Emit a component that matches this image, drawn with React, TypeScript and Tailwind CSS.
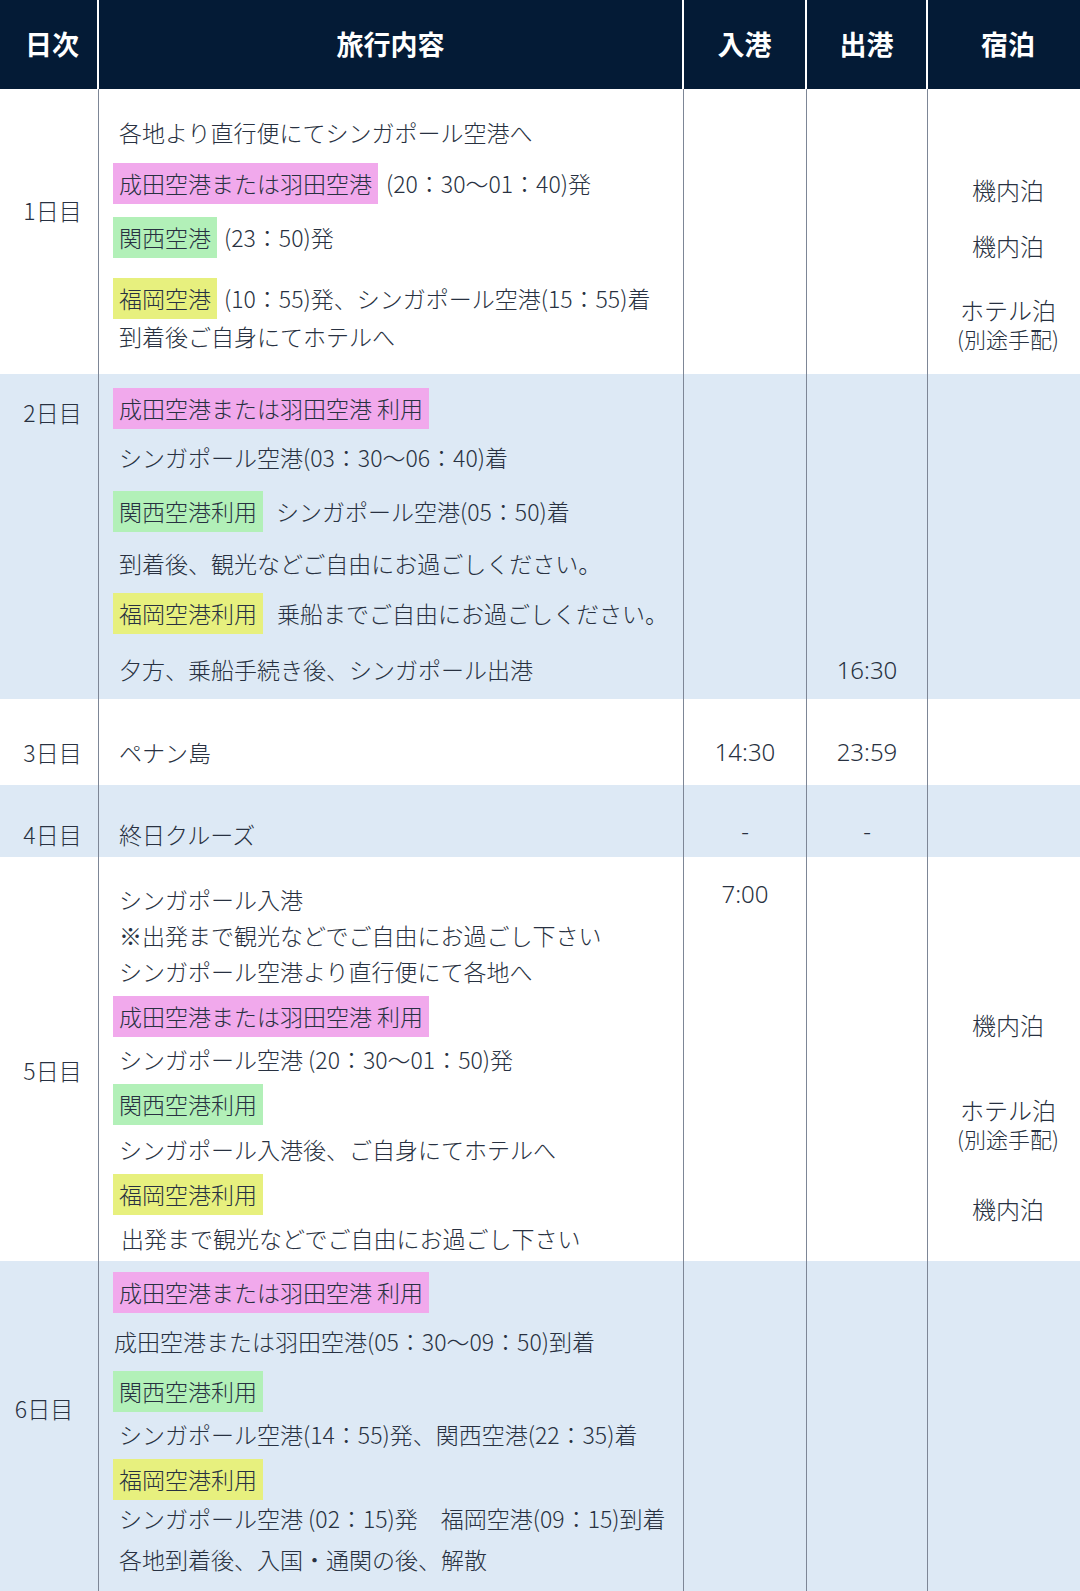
import type { ReactNode } from "react";

const font = "font-['Noto_Sans_CJK_JP','Noto_Sans',sans-serif]";
const cols = "grid grid-cols-[99px_585px_123px_121px_152px]";
// time cells use a latin face with wider digits
const timeCell = "border-r border-[#7d8696] text-center font-['Noto_Sans',sans-serif] text-[24px] font-light";

function Hl({ tone, children }: { tone: "pink" | "green" | "yellow"; children: ReactNode }) {
  const bg =
    tone === "pink" ? "bg-[#f1a9ec]" : tone === "green" ? "bg-[#b2f0b8]" : "bg-[#e7f07e]";
  return <span className={`-ml-[6px] flex h-full items-center px-[6px] ${bg}`}>{children}</span>;
}

function HlRow({ tone, children, after, className = "" }: { tone: "pink" | "green" | "yellow"; children: ReactNode; after?: ReactNode; className?: string }) {
  return (
    <div className={`flex h-[41px] items-center whitespace-nowrap ${className}`}>
      <Hl tone={tone}>{children}</Hl>
      {after}
    </div>
  );
}

function Line({ children, className = "" }: { children: ReactNode; className?: string }) {
  return <div className={`leading-[36px] whitespace-nowrap ${className}`}>{children}</div>;
}

// ホテル泊 + (別途手配)
function Hotel({ className = "" }: { className?: string }) {
  return (
    <div className={className}>
      <div className="leading-[28px]">ホテル泊</div>
      <div className="mt-[2px] text-[22px] leading-[24px]">(別途手配)</div>
    </div>
  );
}

export default function App() {
  return (
    <div className={`w-[1080px] bg-white text-[23px] font-light text-[#283141] ${font}`}>
      {/* header */}
      <div className={`${cols} h-[89px] bg-[#041b36] text-[27px] font-bold text-white`}>
        <div className="flex items-center justify-center border-r-2 border-white pl-[7px]">日次</div>
        <div className="flex items-center justify-center border-r-2 border-white">旅行内容</div>
        <div className="flex items-center justify-center border-r-2 border-white">入港</div>
        <div className="flex items-center justify-center border-r-2 border-white">出港</div>
        <div className="flex items-center justify-center pl-[8px]">宿泊</div>
      </div>

      {/* day 1 */}
      <div className={`${cols} h-[285px] bg-white`}>
        <div className="border-r border-[#7d8696] pt-[103px] pl-[7px] text-center">
          <Line>1日目</Line>
        </div>
        <div className="border-r border-[#7d8696] pt-[25px] pl-[20px]">
          <Line>各地より直行便にてシンガポール空港へ</Line>
          <HlRow tone="pink" className="mt-[13px]" after={<span className="ml-[8px]">(20：30〜01：40)発</span>}>
            成田空港または羽田空港
          </HlRow>
          <HlRow tone="green" className="mt-[13px]" after={<span className="ml-[7px]">(23：50)発</span>}>
            関西空港
          </HlRow>
          <HlRow tone="yellow" className="mt-[20px]" after={<span className="ml-[7px]">(10：55)発、シンガポール空港(15：55)着</span>}>
            福岡空港
          </HlRow>
          <Line className="-mt-[1px]">到着後ご自身にてホテルへ</Line>
        </div>
        <div className="border-r border-[#7d8696]" />
        <div className="border-r border-[#7d8696]" />
        <div className="pt-[83px] pl-[8px] text-center text-[24px]">
          <Line>機内泊</Line>
          <Line className="mt-[20px]">機内泊</Line>
          <Hotel className="mt-[32px]" />
        </div>
      </div>

      {/* day 2 */}
      <div className={`${cols} h-[325px] bg-[#dde9f5]`}>
        <div className="border-r border-[#7d8696] pt-[20px] pl-[7px] text-center">
          <Line>2日目</Line>
        </div>
        <div className="border-r border-[#7d8696] pt-[14px] pl-[20px]">
          <HlRow tone="pink">成田空港または羽田空港 利用</HlRow>
          <Line className="mt-[10px]">シンガポール空港(03：30〜06：40)着</Line>
          <HlRow tone="green" className="mt-[16px]" after={<span className="ml-[13px]">シンガポール空港(05：50)着</span>}>
            関西空港利用
          </HlRow>
          <Line className="mt-[13px]">到着後、観光などご自由にお過ごしください。</Line>
          <HlRow tone="yellow" className="mt-[12px]" after={<span className="ml-[14px]">乗船までご自由にお過ごしください。</span>}>
            福岡空港利用
          </HlRow>
          <Line className="mt-[17px]">夕方、乗船手続き後、シンガポール出港</Line>
        </div>
        <div className="border-r border-[#7d8696]" />
        <div className={`${timeCell} pt-[278px]`}>
          <Line>16:30</Line>
        </div>
        <div />
      </div>

      {/* day 3 */}
      <div className={`${cols} h-[86px] bg-white`}>
        <div className="border-r border-[#7d8696] pt-[35px] pl-[7px] text-center">
          <Line>3日目</Line>
        </div>
        <div className="border-r border-[#7d8696] pt-[35px] pl-[20px]">
          <Line>ペナン島</Line>
        </div>
        <div className={`${timeCell} pt-[35px]`}>
          <Line>14:30</Line>
        </div>
        <div className={`${timeCell} pt-[35px]`}>
          <Line>23:59</Line>
        </div>
        <div />
      </div>

      {/* day 4 */}
      <div className={`${cols} h-[72px] bg-[#dde9f5]`}>
        <div className="border-r border-[#7d8696] pt-[31px] pl-[7px] text-center">
          <Line>4日目</Line>
        </div>
        <div className="border-r border-[#7d8696] pt-[31px] pl-[20px]">
          <Line>終日クルーズ</Line>
        </div>
        <div className={`${timeCell} pt-[28px]`}>
          <Line>-</Line>
        </div>
        <div className={`${timeCell} pt-[28px]`}>
          <Line>-</Line>
        </div>
        <div />
      </div>

      {/* day 5 */}
      <div className={`${cols} h-[404px] bg-white`}>
        <div className="border-r border-[#7d8696] pt-[195px] pl-[7px] text-center">
          <Line>5日目</Line>
        </div>
        <div className="border-r border-[#7d8696] pt-[24px] pl-[20px]">
          <Line className="leading-[35.5px]">シンガポール入港</Line>
          <Line className="leading-[35.5px]">※出発まで観光などでご自由にお過ごし下さい</Line>
          <Line className="leading-[35.5px]">シンガポール空港より直行便にて各地へ</Line>
          <HlRow tone="pink" className="mt-[7px]">成田空港または羽田空港 利用</HlRow>
          <Line className="mt-[4px]">シンガポール空港 (20：30〜01：50)発</Line>
          <HlRow tone="green" className="mt-[7px]">関西空港利用</HlRow>
          <Line className="mt-[6px]">シンガポール入港後、ご自身にてホテルへ</Line>
          <HlRow tone="yellow" className="mt-[7px]">福岡空港利用</HlRow>
          <Line className="mt-[5px] ml-[2px]">出発まで観光などでご自由にお過ごし下さい</Line>
        </div>
        <div className={`${timeCell} pt-[19px]`}>
          <Line>7:00</Line>
        </div>
        <div className="border-r border-[#7d8696]" />
        <div className="pt-[150px] pl-[8px] text-center text-[24px]">
          <Line>機内泊</Line>
          <Hotel className="mt-[53px]" />
          <Line className="mt-[41px]">機内泊</Line>
        </div>
      </div>

      {/* day 6 */}
      <div className={`${cols} h-[330px] bg-[#dde9f5]`}>
        <div className="border-r border-[#7d8696] pt-[129px] pl-[7px] text-center">
          <Line className="-ml-[17px]">6日目</Line>
        </div>
        <div className="border-r border-[#7d8696] pt-[11px] pl-[20px]">
          <HlRow tone="pink">成田空港または羽田空港 利用</HlRow>
          <Line className="mt-[10px] -ml-[5px]">成田空港または羽田空港(05：30〜09：50)到着</Line>
          <HlRow tone="green" className="mt-[12px]">関西空港利用</HlRow>
          <Line className="mt-[4px]">シンガポール空港(14：55)発、関西空港(22：35)着</Line>
          <HlRow tone="yellow" className="mt-[7px]">福岡空港利用</HlRow>
          <Line>シンガポール空港 (02：15)発　福岡空港(09：15)到着</Line>
          <Line className="mt-[5px]">各地到着後、入国・通関の後、解散</Line>
        </div>
        <div className="border-r border-[#7d8696]" />
        <div className="border-r border-[#7d8696]" />
        <div />
      </div>
    </div>
  );
}
